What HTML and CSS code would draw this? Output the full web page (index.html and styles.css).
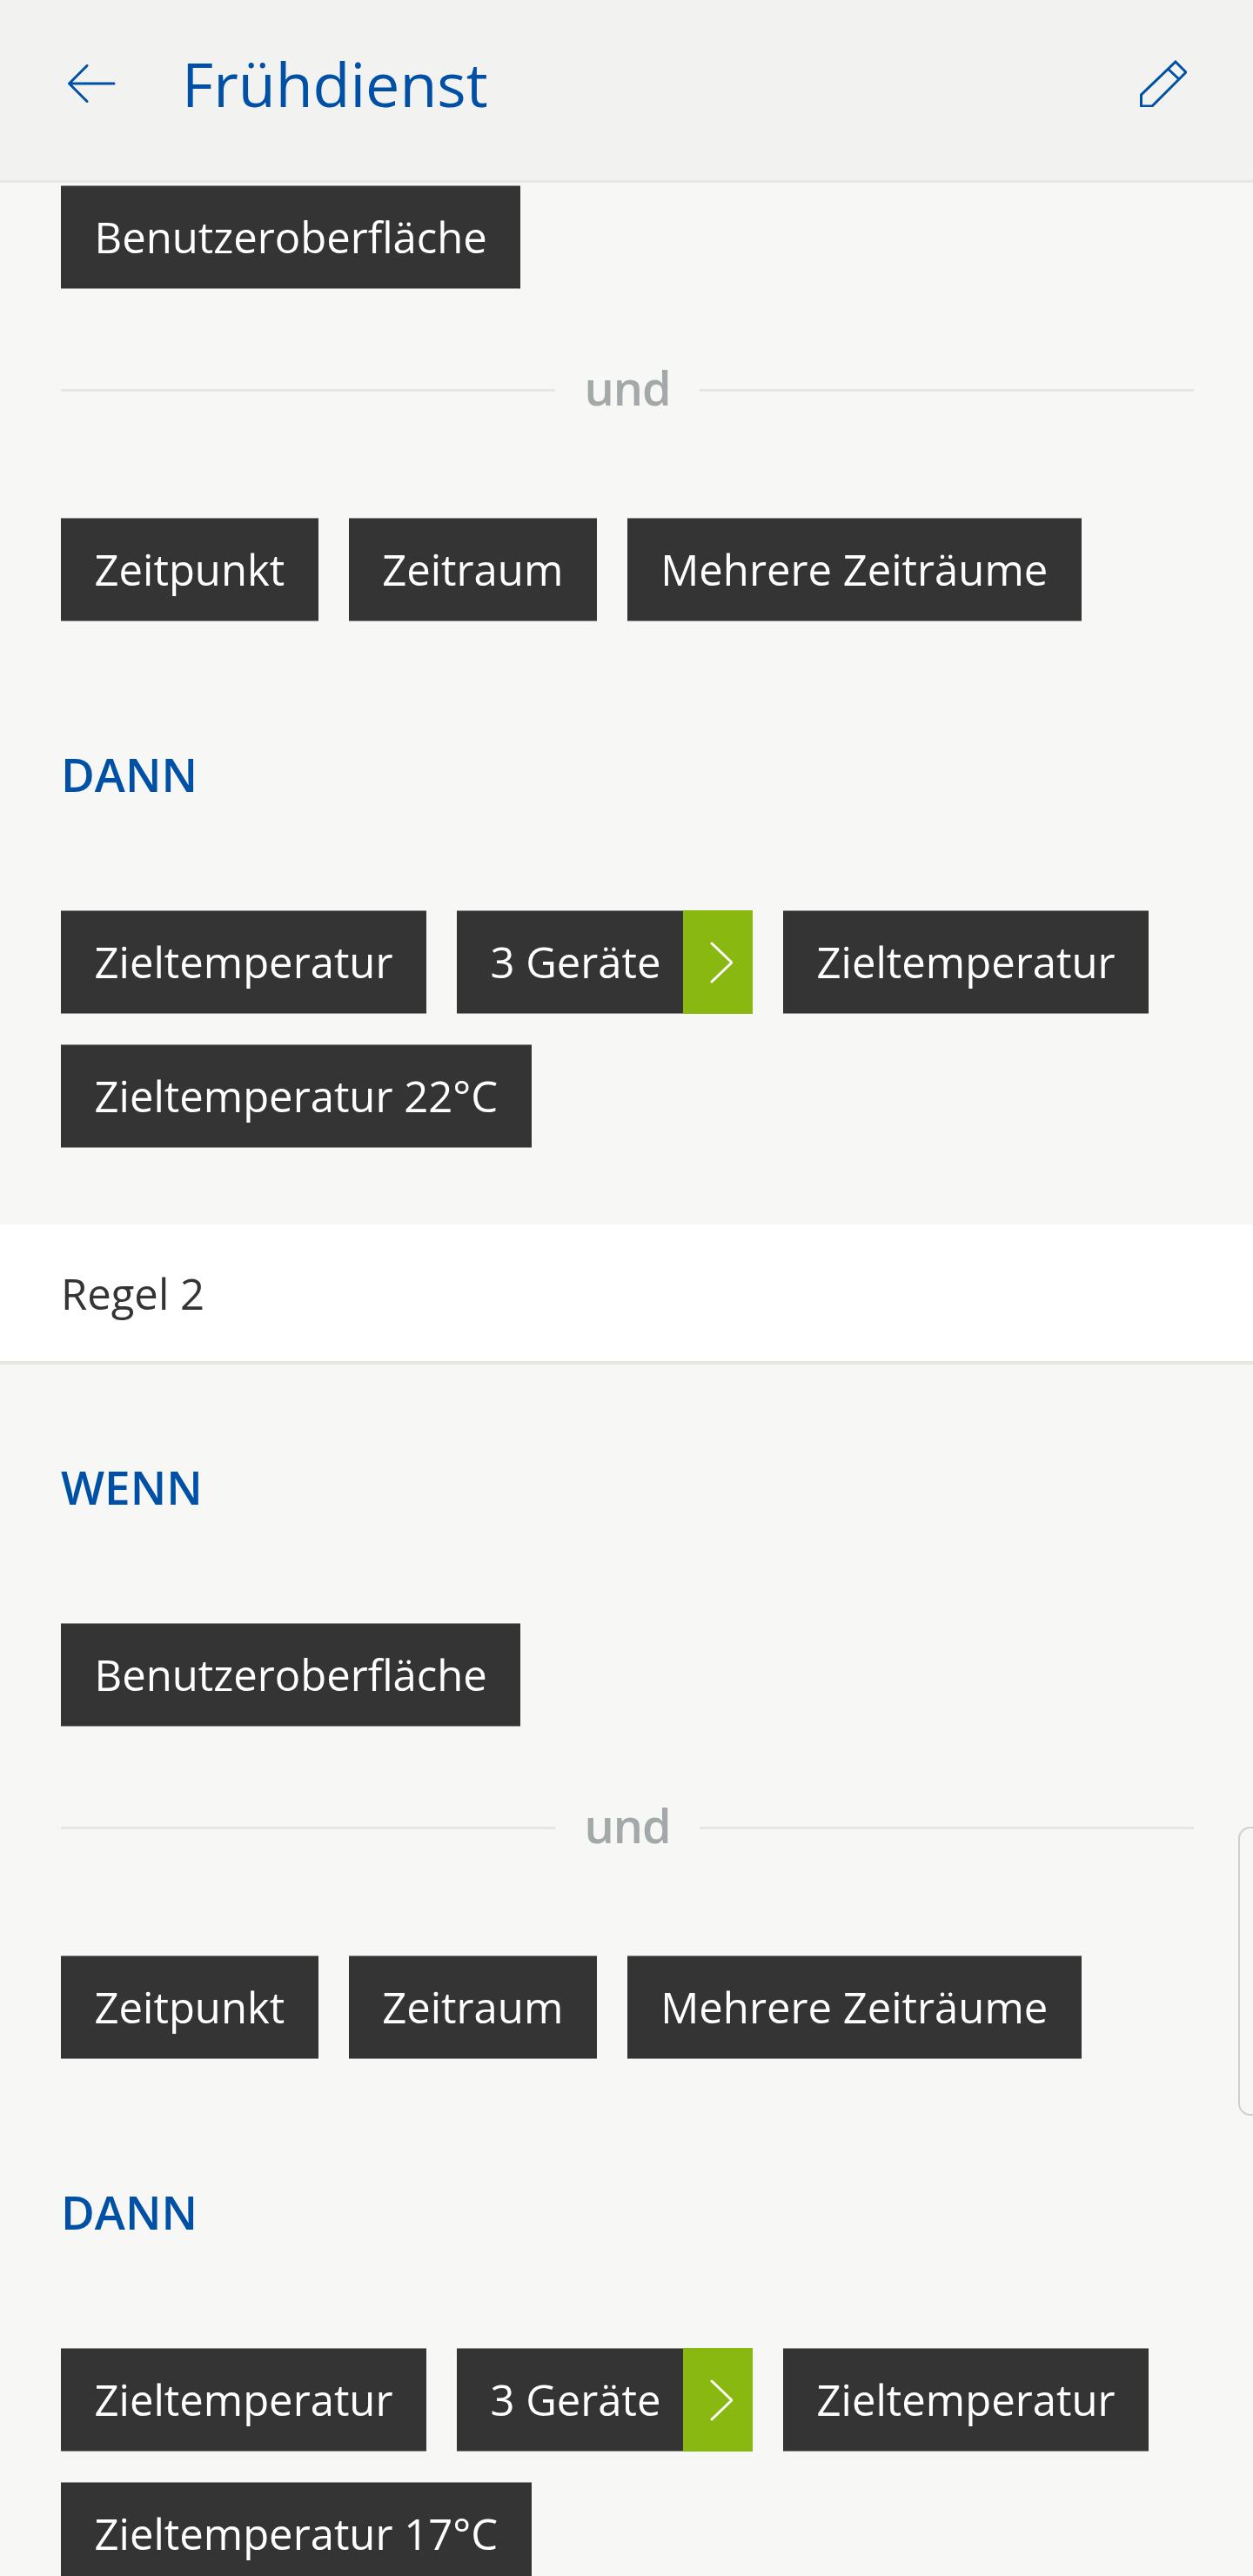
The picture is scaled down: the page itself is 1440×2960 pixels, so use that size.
FILE: index.html
```html
<!DOCTYPE html>
<html lang="de">
<head>
<meta charset="utf-8">
<title>Frühdienst</title>
<link rel="stylesheet" href="styles.css">
</head>
<body>
<div class="app">
  <header class="topbar">
    <svg class="icon-back" width="56" height="44" viewBox="0 0 56 44" fill="none" stroke="#0050a5" stroke-width="3" stroke-linecap="round" stroke-linejoin="round"><path d="M22 1.5 1.5 22 22 42.5 M1.5 22H53"/></svg>
    <h1 class="title">Frühdienst</h1>
    <svg class="icon-edit" width="54" height="54" viewBox="0 0 54 54" fill="none" stroke="#0050a5" stroke-width="3" stroke-linejoin="miter"><path d="M41 2 53 14 14 53H1.5V40Z M32.7 10.5 45 22"/></svg>
  </header>
  <main class="rules">
    <section class="rule rule-first">
      <div class="chips"><span class="chip">Benutzeroberfläche</span></div>
      <div class="and"><span class="and-label">und</span></div>
      <div class="chips"><span class="chip">Zeitpunkt</span><span class="chip">Zeitraum</span><span class="chip">Mehrere Zeiträume</span></div>
      <h2 class="section-label then">DANN</h2>
      <div class="chips">
        <span class="chip">Zieltemperatur</span>
        <span class="chip chip-split"><span class="chip-text">3 Geräte</span><span class="chip-go"><svg width="26" height="48" viewBox="0 0 26 48" fill="none" stroke="#fff" stroke-width="3" stroke-linecap="round" stroke-linejoin="round"><path d="M2 2 25 24 2 46"/></svg></span></span>
        <span class="chip">Zieltemperatur</span>
        <span class="chip">Zieltemperatur 22°C</span>
      </div>
    </section>
    <div class="rule-head">Regel 2</div>
    <section class="rule">
      <h2 class="section-label when">WENN</h2>
      <div class="chips"><span class="chip">Benutzeroberfläche</span></div>
      <div class="and"><span class="and-label">und</span></div>
      <div class="chips"><span class="chip">Zeitpunkt</span><span class="chip">Zeitraum</span><span class="chip">Mehrere Zeiträume</span></div>
      <h2 class="section-label then">DANN</h2>
      <div class="chips">
        <span class="chip">Zieltemperatur</span>
        <span class="chip chip-split"><span class="chip-text">3 Geräte</span><span class="chip-go"><svg width="26" height="48" viewBox="0 0 26 48" fill="none" stroke="#fff" stroke-width="3" stroke-linecap="round" stroke-linejoin="round"><path d="M2 2 25 24 2 46"/></svg></span></span>
        <span class="chip">Zieltemperatur</span>
        <span class="chip">Zieltemperatur 17°C</span>
      </div>
    </section>
  </main>
  <div class="edge-handle"></div>
</div>
</body>
</html>
```
FILE: styles.css
```css
* { box-sizing: border-box; }
html, body { margin: 0; padding: 0; }
body { font-family: "Open Sans", sans-serif; background: #f7f7f5; }
.app { position: relative; width: 1440px; height: 2960px; overflow: hidden; background: #f7f7f5; }
.topbar { display: flex; align-items: center; height: 210px; padding: 0 76px 15px 78px; background: #f2f2f0; border-bottom: 3px solid #e6e6e4; }
.icon-back { flex: none; margin-right: 75px; }
.title { flex: 1; margin: 0; font-size: 70px; font-weight: 400; line-height: 90px; color: #0050a5; }
.icon-edit { flex: none; }
.rules { display: flex; flex-direction: column; }
.rule { padding: 0 68px 88px 70px; }
.rule-first { padding-top: 3px; }
.chips { display: flex; flex-wrap: wrap; gap: 35px; }
.chip { display: flex; align-items: center; height: 119px; padding: 0 38.5px; font-size: 49px; line-height: 1; color: #fff; background: #343434; border: 1px solid #8e8e8e; border-width: 1px 0; }
.chip-split { padding: 0 0 0 38.5px; }
.chip-text { margin-right: 25.5px; }
.chip-go { display: flex; align-items: center; justify-content: flex-start; align-self: stretch; width: 80px; margin: -1px 0; padding-left: 31px; background: #89b910; }
.and { display: flex; align-items: center; gap: 33px; height: 119px; margin: 57px 0 87px; }
.and::before, .and::after { content: ""; flex: 1; height: 3px; background: #e6e6e3; }
.and-label { padding-bottom: 8px; font-size: 54px; font-weight: 600; letter-spacing: -1px; color: #a3a8a9; line-height: 1; }
.section-label { margin: 0; font-size: 53px; font-weight: 600; line-height: 68px; color: #0050a5; }
.then { margin: 142px 0 122px; }
.when { margin: 107px 0 122px; }
.rule-head { display: flex; align-items: center; height: 161px; padding: 0 70px; font-size: 49px; color: #343434; background: #fff; border-bottom: 4px solid #e6e6e3; }
.edge-handle { position: absolute; top: 2099px; right: -12px; width: 29px; height: 332px; border: 2px solid #cfcfcf; border-radius: 14px; }
```
